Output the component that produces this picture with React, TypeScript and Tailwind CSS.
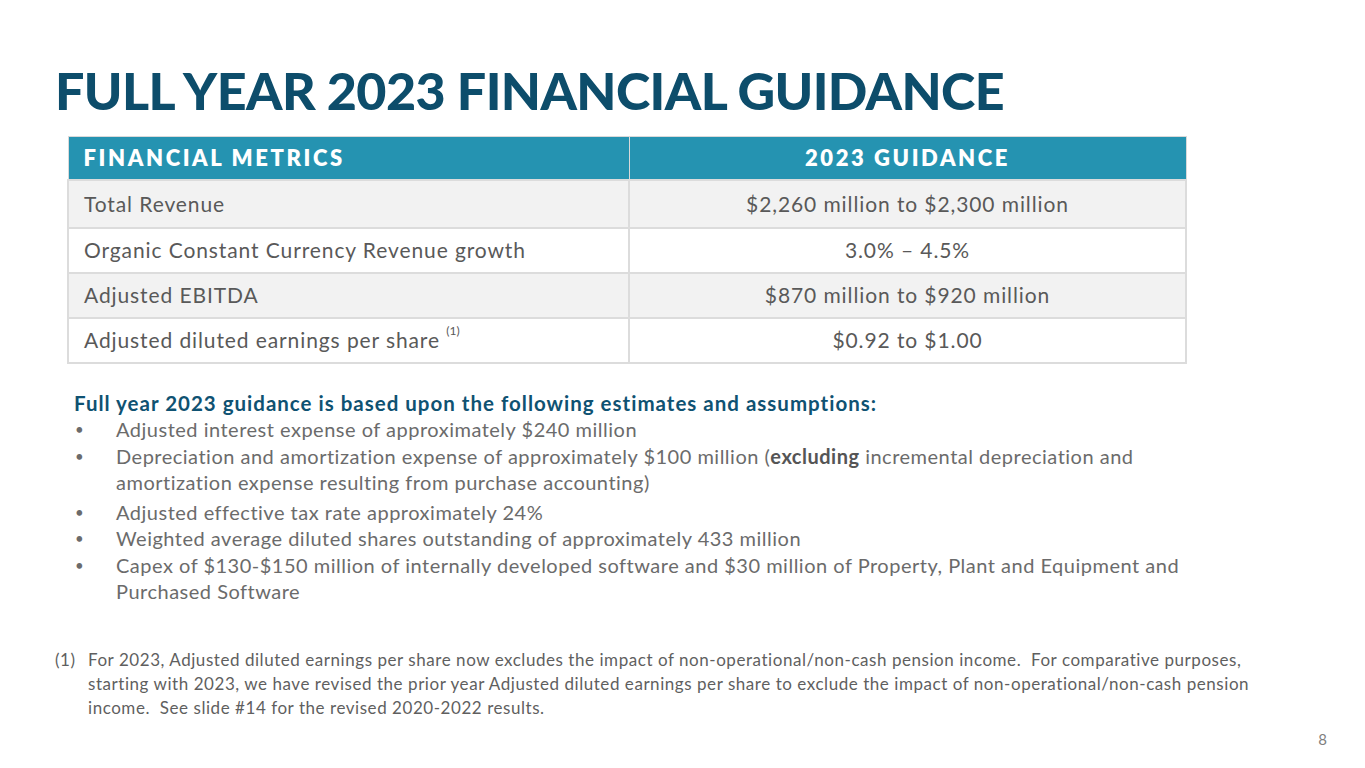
const rows: [React.ReactNode, string][] = [
  ['Total Revenue', '$2,260 million to $2,300 million'],
  ['Organic Constant Currency Revenue growth', '3.0% – 4.5%'],
  ['Adjusted EBITDA', '$870 million to $920 million'],
  [
    <>
      Adjusted diluted earnings per share <sup className="text-[12px] align-[7px] tracking-normal">(1)</sup>
    </>,
    '$0.92 to $1.00',
  ],
];

const bullets: React.ReactNode[] = [
  'Adjusted interest expense of approximately $240 million',
  <>
    Depreciation and amortization expense of approximately $100 million (<b className="font-bold text-[#555]">excluding</b>{' '}
    incremental depreciation and
    <br />
    amortization expense resulting from purchase accounting)
  </>,
  'Adjusted effective tax rate approximately 24%',
  'Weighted average diluted shares outstanding of approximately 433 million',
  <>
    Capex of $130-$150 million of internally developed software and $30 million of Property, Plant and Equipment and
    <br />
    Purchased Software
  </>,
];

export default function App() {
  return (
    <div className="w-[1365px] h-[768px] bg-white relative overflow-hidden font-['Lato',sans-serif] text-[#595959]">
      <div className="pl-[55px] pt-[60px]">
        <h1 className="text-[52px] leading-[60px] font-black tracking-[-0.6px] text-[#0d4d6b]">
          FULL YEAR 2023 FINANCIAL GUIDANCE
        </h1>
      </div>

      <div className="ml-[67px] mt-[16px] w-[1120px]">
        <table className="w-full border-collapse text-[21px] tracking-[0.9px]">
          <thead>
            <tr className="bg-[#2593b1] text-white h-[43px]">
              <th className="w-[561px] text-left pl-[15px] font-extrabold text-[22px] tracking-[2.6px] border border-[#d9d9d9]">
                FINANCIAL METRICS
              </th>
              <th className="text-center font-extrabold text-[22px] tracking-[2.6px] border border-[#d9d9d9]">
                2023 GUIDANCE
              </th>
            </tr>
          </thead>
          <tbody>
            {rows.map(([label, value], i) => (
              <tr key={i} className={`${i % 2 === 0 ? 'bg-[#f2f2f2]' : 'bg-white'} ${i === 0 ? 'h-[48px]' : 'h-[45px]'}`}>
                <td className="pl-[15px] border-2 border-[#dcdcdc]">{label}</td>
                <td className="text-center border-2 border-[#dcdcdc]">{value}</td>
              </tr>
            ))}
          </tbody>
        </table>
      </div>

      <div className="ml-[74px] mt-[26px] w-[1200px] text-[20px] leading-[26.5px] tracking-[0.5px] text-[#6b6b6b]">
        <p className="font-bold text-[#0f5272] text-[20.5px] tracking-[1px]">
          Full year 2023 guidance is based upon the following estimates and assumptions:
        </p>
        <ul>
          {bullets.map((b, i) => (
            <li key={i} className={`flex ${i === 2 ? 'mt-[3px]' : ''}`}>
              <span className="w-[42px] shrink-0 pl-[1px] text-[15px]">•</span>
              <span>{b}</span>
            </li>
          ))}
        </ul>
      </div>

      <div className="ml-[55px] mt-[43px] w-[1260px] flex text-[17px] leading-[24px] tracking-[0.55px] text-[#5f5f5f]">
        <span className="w-[33px] shrink-0">(1)</span>
        <p>
          For 2023, Adjusted diluted earnings per share now excludes the impact of non-operational/non-cash pension
          income.&nbsp; For comparative purposes,
          <br />
          starting with 2023, we have revised the prior year Adjusted diluted earnings per share to exclude the impact of
          non-operational/non-cash pension
          <br />
          income.&nbsp; See slide #14 for the revised 2020-2022 results.
        </p>
      </div>

      <div className="absolute right-[38px] bottom-[18px] text-[15px] text-[#7f7f7f]">8</div>
    </div>
  );
}
